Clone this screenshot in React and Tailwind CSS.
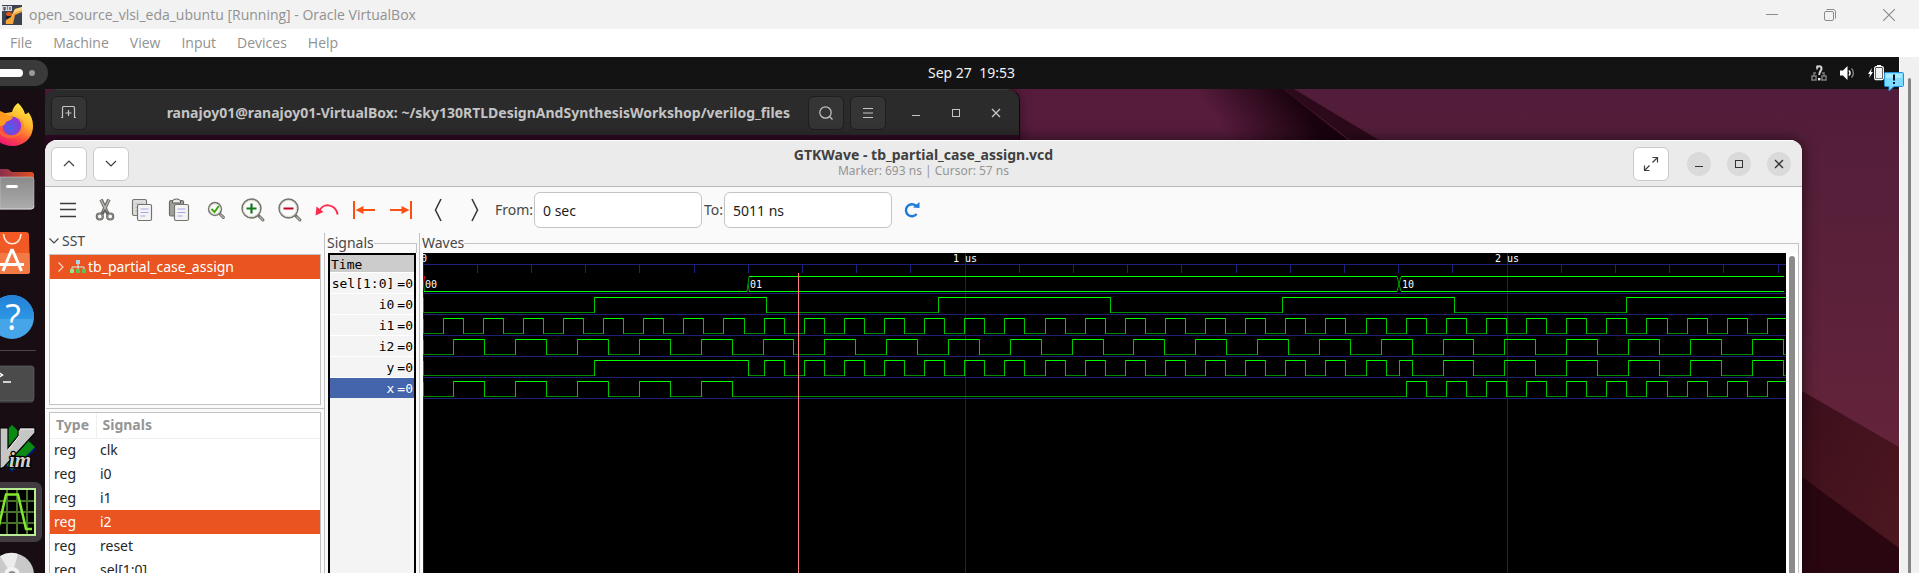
import React from "react";

/* ---------- wave data ---------- */

const PX_PER_NS = 0.5423;
const END_NS = 2513;
const px = (t) => Math.floor(t * PX_PER_NS);

const toggles = (half) => {
  const out = [];
  for (let t = half; t <= END_NS; t += half) out.push(t);
  return out;
};
const levelAt = (edges, t) => edges.filter((e) => e <= t).length % 2;
const between = (edges, a, b) => edges.filter((e) => e > a && e < b);

const I0 = toggles(317);
const I1 = toggles(37);
const I2 = toggles(57);

// Joins pieces of several signals, each valid for a span of time.
function mux(spans) {
  const out = [];
  let level = 0;
  for (const [src, from, to] of spans) {
    const start = levelAt(src, from);
    if (start !== level) {
      out.push(from);
      level = start;
    }
    for (const e of between(src, from, to)) {
      out.push(e);
      level = 1 - level;
    }
  }
  return out;
}

const Y = mux([[I0, 0, 600], [I1, 600, 1800], [I2, 1800, END_NS]]);
const X = mux([[I2, 0, 600], [[], 600, 1800], [I1, 1800, END_NS]]);

const TRACES = [I0, I1, I2, Y, X];
const TICKS = Array.from({ length: 26 }, (_, i) => i);

function Trace({ edges, top }) {
  const parts = [<rect key="s" x="0" y={top + 1} width="1" height="15" fill="#009c00" />];
  const pts = [0, ...edges.map(px), 1363];
  for (let i = 0; i < pts.length - 1; i++) {
    const high = i % 2 === 1;
    parts.push(
      <rect key={"h" + i} x={pts[i]} y={high ? top : top + 15} width={pts[i + 1] - pts[i] + 1} height="1" fill={high ? "#00ff00" : "#008a00"} />
    );
    if (i > 0) parts.push(<rect key={"v" + i} x={pts[i]} y={top} width="1" height="16" fill="#00c800" />);
  }
  return <g>{parts}</g>;
}

function WaveCanvas() {
  const a = px(600);
  const b = px(1800);
  return (
    <svg className="h-full min-w-0 flex-1 bg-black" role="img" aria-label="Waveforms" shapeRendering="crispEdges">
      <rect x="0" y="11" width="100%" height="1" fill="#202080" />
      {TICKS.map((i) => (
        <rect key={i} x={Math.floor(i * 54.2)} y="11" width="1" height="9" fill="#202080" />
      ))}
      {[0, 1, 2, 3, 4, 5].map((i) => (
        <rect key={i} x="0" y={40 + i * 21} width="100%" height="1" fill="#1f1f78" />
      ))}
      {[0, 542, 1084].map((x) => (
        <rect key={x} x={x} y="0" width="1" height="100%" fill="#1c1c6c" />
      ))}
      {TRACES.map((e, i) => (
        <Trace key={i} edges={e} top={44 + i * 21} />
      ))}
      <rect x="1" y="38" width={a - 2} height="1" fill="#00ff00" />
      <rect x={a + 1} y="23" width={b - a - 3} height="1" fill="#00ff00" />
      <rect x={a + 1} y="38" width={b - a - 3} height="1" fill="#00ff00" />
      <rect x={b + 2} y="23" width="383" height="1" fill="#00ff00" />
      <rect x={b + 2} y="38" width="383" height="1" fill="#00ff00" />
      <g shapeRendering="auto" fill="none" strokeWidth="1">
        <path d="M1.5 23L0.5 31" stroke="#ff0000" />
        <path d="M0.5 31L1.5 38" stroke="#009000" />
        <path d={`M${a - 1} 38.500L${a + 1} 23.500M${a} 31L${a + 1.5} 38.500`} stroke="#00a000" />
        <path d={`M${b - 2} 23.500L${b + 2} 38.500M${b - 2} 38.500L${b + 2} 23.500`} stroke="#00a000" />
      </g>
      <rect x="375" y="20" width="1" height="100%" fill="#ff8080" />
      <g fill="#ffffff" className="font-['DejaVu_Sans_Mono',monospace] text-[10px]">
        <text x="-2" y="9">0</text>
        <text x="530" y="9" xmlSpace="preserve">1 us</text>
        <text x="1072" y="9" xmlSpace="preserve">2 us</text>
        <text x="2" y="35">00</text>
        <text x="327" y="35">01</text>
        <text x="979" y="35">10</text>
      </g>
    </svg>
  );
}

/* ---------- host window ---------- */

function VBoxIcon() {
  return (
    <svg width="20" height="20" viewBox="0 0 20 20" aria-hidden="true">
      <rect width="20" height="20" fill="#3b4350" />
      <path d="M20 2L20 7L13 10L11 19L4 19C3 14 6 11 10 10L13 4Z" fill="#f8a63a" />
      <path d="M20 2L20 5L12 8L9 12L10 10L13 4Z" fill="#ffd58a" />
      <path d="M4 8C8 6 10 9 9 12L4 15Z" fill="#1d222a" />
      <ellipse cx="7" cy="9" rx="3" ry="2" fill="#e4571b" />
      <rect x="0" y="1" width="10" height="5" fill="#d8dbe0" />
      <path d="M2 2V5H3V2M5 2H6M5 4H6M8 2V5" stroke="#333" strokeWidth="1" fill="none" />
    </svg>
  );
}

const HOST_MENU = ["File", "Machine", "View", "Input", "Devices", "Help"];

function HostChrome() {
  return (
    <header className="font-['Open_Sans','Noto_Sans',sans-serif] text-[#919191]">
      <div className="flex h-[29px] items-center bg-[#f2f2f2] pl-0.5">
        <VBoxIcon />
        <h1 className="ml-[7px] flex-1 text-[14px] leading-5">open_source_vlsi_eda_ubuntu [Running] - Oracle VirtualBox</h1>
        <div className="flex h-full items-center text-[#8c8c8c]">
          <button aria-label="Minimize" className="flex h-full w-[58px] items-center justify-center">
            <svg width="12" height="12" viewBox="0 0 12 12"><path d="M0 5.500H12" stroke="currentColor" /></svg>
          </button>
          <button aria-label="Restore" className="flex h-full w-[58px] items-center justify-center">
            <svg width="12" height="12" viewBox="0 0 12 12" fill="none" stroke="currentColor"><rect x="0.500" y="2.500" width="9" height="9" rx="1.500" /><path d="M2.500 0.500H9C10.500 .500 11.500 1.500 11.500 3V9.500" /></svg>
          </button>
          <button aria-label="Close" className="flex h-full w-[60px] items-center justify-center">
            <svg width="12" height="12" viewBox="0 0 12 12"><path d="M0 0L12 12M12 0L0 12" stroke="currentColor" strokeWidth="1.200" /></svg>
          </button>
        </div>
      </div>
      <nav className="flex h-7 items-center gap-[21px] bg-white pl-[10px] text-[14px] leading-5">
        {HOST_MENU.map((m) => (
          <button key={m}>{m}</button>
        ))}
      </nav>
    </header>
  );
}

/* ---------- guest top bar ---------- */

function TopBar() {
  return (
    <div className="grid h-8 shrink-0 grid-cols-[1fr_auto_1fr] items-center bg-[#131313] text-[#f2f2f2]">
      <button aria-label="Workspaces" className="flex h-[26px] w-12 items-center gap-1.5 rounded-r-full bg-[#3a3a3a]">
        <span className="h-2 w-[23px] rounded-r-full bg-white" />
        <span className="size-1.5 rounded-full bg-[#9a9a9a]" />
      </button>
      <button className="pl-11 text-[14px] leading-5 whitespace-pre">Sep 27  19:53</button>
      <div className="flex items-center justify-end gap-[13px] pr-[15px]">
        <svg width="16" height="16" viewBox="0 0 16 16" fill="none" aria-label="Network">
          <g stroke="#7d7d7d" strokeWidth="1.500"><rect x="1" y="11" width="4" height="4" /><rect x="11" y="11" width="4" height="4" /><path d="M3 11V8H5M13 11V8H11M6 5V1H7" /></g>
          <path d="M6 3.500C6 .500 10.500 .500 10.500 3.500C10.500 6 8.200 6 8.200 10" stroke="#d5d5d5" strokeWidth="2" /><rect x="7" y="13" width="2.400" height="2.400" fill="#f2f2f2" />
        </svg>
        <svg width="15" height="14" viewBox="0 0 15 14" fill="none" aria-label="Volume">
          <path d="M0 4.500H3L7.500 0V14L3 9.500H0Z" fill="#fff" /><path d="M9 4.500C10.300 6 10.300 8 9 9.500" stroke="#eee" strokeWidth="1.500" /><path d="M11.500 2.500C14 5 14 9 11.500 11.500" stroke="#888" strokeWidth="1.300" />
        </svg>
        <svg width="16" height="16" viewBox="0 0 16 16" fill="none" aria-label="Battery">
          <path d="M4 3L0 9H2L1 13L5 7H3Z" fill="#fff" /><rect x="9" y="0" width="4" height="2" fill="#fff" /><rect x="6.700" y="1.700" width="8.600" height="13" rx="1.500" stroke="#fff" strokeWidth="1.300" /><rect x="8" y="3" width="6" height="10.500" fill="#f2f2f2" />
        </svg>
      </div>
    </div>
  );
}

/* ---------- dock ---------- */

function DockButton({ label, children }) {
  return (
    <button aria-label={label} className="block h-16 w-[45px]">
      <svg width="45" height="64" viewBox="0 0 45 64" aria-hidden="true">{children}</svg>
    </button>
  );
}

function Dock() {
  return (
    <nav aria-label="Dock" className="w-[45px] shrink-0 overflow-hidden bg-[#170d12] pt-[3px]">
      <svg width="0" height="0" className="absolute">
        <defs>
          <linearGradient id="ff" x1="0.800" y1="0" x2="0.300" y2="1"><stop offset="0" stopColor="#fff14a" /><stop offset="0.400" stopColor="#ffb12a" /><stop offset="0.700" stopColor="#ff4f3b" /><stop offset="1" stopColor="#e9117c" /></linearGradient>
          <radialGradient id="globe" cx="0.400" cy="0.600"><stop offset="0" stopColor="#4a62e8" /><stop offset="1" stopColor="#8b3ad8" /></radialGradient>
          <linearGradient id="front" x1="0" y1="0" x2="0" y2="1"><stop offset="0" stopColor="#8a8a8a" /><stop offset="1" stopColor="#acacac" /></linearGradient>
          <linearGradient id="back" x1="0" y1="0" x2="1" y2="0"><stop offset="0" stopColor="#8a2f4e" /><stop offset="1" stopColor="#e5501f" /></linearGradient>
          <linearGradient id="help" x1="0" y1="0" x2="0" y2="1"><stop offset="0" stopColor="#2381d6" /><stop offset="1" stopColor="#2d96e4" /></linearGradient>
        </defs>
      </svg>
      <DockButton label="Firefox">
        <path d="M18 11C22 15 24 18 25 22C27 22 28 21 28 20C32 25 33 29 33 34C33 46 24 54 12 54C1 54 -9 46 -9 34L0 22L12 20C13 16 15 13 18 11Z" fill="url(#ff)" />
        <circle cx="12" cy="34" r="9.500" fill="url(#globe)" />
        <path d="M0 19C4 20 6 22 8 24L13 25C12 28 8 29 6 30C5 33 3 34 0 34Z" fill="#ff9a1e" />
        <path d="M14 24C18 24 22 28 21 34C20 41 14 44 10 43C6 43 2 41 0 38V42C3 45 8 47 13 46C21 45 25 38 24 31C22 27 18 24 14 24Z" fill="#ff7a2e" opacity="0.550" />
      </DockButton>
      <DockButton label="Files">
        <path d="M0 13H8L12 16H31Q34 16 34 19V45H0Z" fill="url(#back)" />
        <path d="M0 21H31Q34 21 34 24V50Q34 53 31 53H0Z" fill="url(#front)" stroke="#cfcfcf" strokeWidth="0.500" />
        <path d="M0 53H31Q34 53 34 50" stroke="#d5d5d5" fill="none" />
        <rect x="6" y="29" width="12" height="3" rx="1.500" fill="#fff" />
      </DockButton>
      <DockButton label="App Center">
        <path d="M0 12H26Q29 12 29 15L30 51Q30 54 27 54H0Z" fill="#f15a24" />
        <path d="M0 33H29.500L30 51Q30 54 27 54H0Z" fill="#f47a45" />
        <path d="M3.500 14C4 27 20.500 27 21 14" stroke="#ffe9de" strokeWidth="1.600" fill="none" />
        <path d="M12 29L3 51M12 29L21.500 51M0 44.500H24" stroke="#fff" strokeWidth="3" fill="none" />
      </DockButton>
      <DockButton label="Help">
        <circle cx="12" cy="33" r="22" fill="#46a5e9" />
        <path d="M-10 35V33A22 22 0 0 1 34 33V35Z" fill="url(#help)" />
        <text x="13" y="46" textAnchor="middle" fill="#fff" className="font-['Open_Sans',sans-serif] text-[36px]">?</text>
      </DockButton>
      <div className="flex h-1 items-center"><div className="h-px w-9 bg-[#4b4448]" /></div>
      <DockButton label="Terminal">
        <rect x="-10" y="14" width="44" height="37" rx="3" fill="#303030" />
        <rect x="-10" y="14" width="44" height="35" rx="3" fill="#4b4b4b" stroke="#6a6a6a" strokeWidth="0.600" />
        <path d="M-2 20L2.500 23L-2 26M3 30H11" stroke="#fff" strokeWidth="1.500" fill="none" />
      </DockButton>
      <DockButton label="Vim">
        <path d="M12 9L36 33L12 56L-12 33Z" fill="#00187c" />
        <path d="M12 9L35 31L12 54L-12 32Z" fill="#0a8a12" />
        <path d="M-6 12H8V16H8V32L18 20V15L20 12H35V17L4 51L0 53V12Z" fill="#c6c6c6" stroke="#000" strokeWidth="1.200" />
        <path d="M20 13H34M8 34L19 20" stroke="#fff" strokeWidth="0.800" />
        <text x="9" y="51" fill="#d0d0d0" stroke="#000" strokeWidth="2.500" paintOrder="stroke" className="font-['Liberation_Serif',serif] text-[21px] font-bold italic">im</text>
      </DockButton>
      <DockButton label="GTKWave">
        <rect x="-12" y="2" width="54" height="60" rx="7" fill="#423c40" />
        <rect x="-12" y="9" width="47" height="46" fill="#000" stroke="#b9ec93" strokeWidth="2" />
        <path d="M7 10V54M17 10V54M27 10V54M0 21H34M0 32H34M0 43H34" stroke="#45732a" strokeWidth="2" />
        <path d="M-2 50L6 14.500H18L26 49H32" stroke="#82e62f" strokeWidth="2.500" fill="none" />
      </DockButton>
      <DockButton label="Disc">
        <circle cx="12" cy="31" r="22" fill="#c9c9c9" />
        <path d="M12 31L0 12A22 22 0 0 1 18 10Z" fill="#ececec" />
        <circle cx="12" cy="31" r="8" fill="#f4f4f4" /><circle cx="12" cy="31" r="4" fill="#8a8a8a" />
      </DockButton>
    </nav>
  );
}

/* ---------- windows ---------- */

const Bars = ({ s = 16, c = "#3d3d3d" }) => (
  <svg width={s} height={s} viewBox="0 0 16 16" aria-hidden="true"><path d="M0 1.500H16M0 7.500H16M0 14.500H16" stroke={c} strokeWidth="1.300" /></svg>
);
const CONTROLS = [
  ["Minimize", <path key="p" d="M2 8.500H10" stroke="currentColor" fill="none" />],
  ["Maximize", <rect key="p" x="2.500" y="2.500" width="7" height="7" stroke="currentColor" fill="none" />],
  ["Close", <path key="p" d="M2 2L10 10M10 2L2 10" stroke="currentColor" strokeWidth="1.400" fill="none" />],
];

function WindowControls({ tone }) {
  return (
    <div className="ml-[18px] flex gap-4">
      {CONTROLS.map(([label, shape]) => (
        <button key={label} aria-label={label} className={`flex size-6 items-center justify-center rounded-full ${tone}`}>
          <svg width="12" height="12" viewBox="0 0 12 12">{shape}</svg>
        </button>
      ))}
    </div>
  );
}

function TerminalWindow() {
  const btn = "flex h-[34px] w-9 items-center justify-center rounded-md border border-[#1e1e1e] bg-[#353535]";
  return (
    <section aria-label="Terminal" className="absolute top-0 left-0 h-full w-[974px] overflow-hidden rounded-t-xl border-t border-[#3c3c3c] bg-[#300a24] shadow-[1px_0_0_#140410,0_0_14px_rgba(0,0,0,0.45)]">
      <header className="flex h-[45px] items-center bg-[#2b2b2b] pr-[11px] pl-1.5 text-[#c4c4c4]">
        <button aria-label="New tab" className={btn}>
          <svg width="16" height="14" viewBox="0 0 16 14" fill="none" stroke="currentColor"><path d="M0 11.500H1.500V2Q1.500 .500 3 .500H12Q13.500 .500 13.500 2V11.500H15M7.500 4V10M4.500 7H10.500" strokeWidth="1.200" /></svg>
        </button>
        <h2 className="min-w-0 flex-1 pr-[18px] text-right text-[14px] leading-5 font-bold whitespace-nowrap">ranajoy01@ranajoy01-VirtualBox: ~/sky130RTLDesignAndSynthesisWorkshop/verilog_files</h2>
        <div className="flex gap-1.5">
          <button aria-label="Search" className={btn}>
            <svg width="14" height="14" viewBox="0 0 14 14" fill="none" stroke="currentColor" strokeWidth="1.200"><circle cx="6.500" cy="6.500" r="5.700" /><path d="M10.500 10.500L13.500 13.500" /></svg>
          </button>
          <button aria-label="Menu" className={btn}>
            <svg width="10" height="10" viewBox="0 0 10 10" stroke="currentColor"><path d="M0 .500H10M0 5H10M0 9.500H10" /></svg>
          </button>
        </div>
        <WindowControls tone="text-[#c4c4c4]" />
      </header>
    </section>
  );
}

function Lens({ r, cx, children, s = 24 }) {
  return (
    <svg width={s} height="24" viewBox="0 0 24 24" fill="none" aria-hidden="true">
      <path d={`M${cx + r * 0.7} ${cx + r * 0.7}L${cx + r + 2} ${cx + r + 2}`} stroke="#6f6f6a" strokeWidth="3" strokeLinecap="round" />
      <path d={`M${cx + r * 0.9} ${cx + r * 0.9}L${cx + r + 2} ${cx + r + 2}`} stroke="#b9b9b0" strokeWidth="1.300" strokeLinecap="round" />
      <circle cx={cx} cy={cx} r={r} fill="#fbfbfb" stroke="#777770" strokeWidth="1.600" />
      <circle cx={cx} cy={cx} r={r - 1.2} stroke="#d9d9cc" strokeWidth="1" />
      {children}
    </svg>
  );
}

const Page = ({ x, y, dark }) => (
  <g>
    <rect x={x} y={y} width="14" height="16" rx="1.500" fill={dark ? "#dcdcdc" : "#f4f4f4"} stroke="#74746f" strokeWidth="1.200" />
    <path d={`M${x + 3} ${y + 4.5}H${x + 11}M${x + 3} ${y + 8}H${x + 11}M${x + 3} ${y + 11.5}H${x + 8}`} stroke={dark ? "#b5b5b5" : "#a5a5ea"} strokeWidth="1.200" />
  </g>
);

const TOOLS = [
  ["Menu", <Bars key="i" />],
  ["Cut", (
    <svg key="i" width="20" height="24" viewBox="0 0 20 24" fill="none">
      <path d="M6 1.500L13 16M14 1.500L7 16" stroke="#6a6c68" strokeWidth="3.600" /><path d="M6 2L12.500 15M14 2L7.500 15" stroke="#b4b6b1" strokeWidth="1.500" />
      <circle cx="4.800" cy="18.500" r="3" stroke="#5f615d" strokeWidth="2.200" /><circle cx="15.200" cy="18.500" r="3" stroke="#5f615d" strokeWidth="2.200" />
      <circle cx="4.800" cy="18.500" r="3" stroke="#a9aba6" strokeWidth="0.700" /><circle cx="15.200" cy="18.500" r="3" stroke="#a9aba6" strokeWidth="0.700" />
      <path d="M7 16L10 12L13 16" stroke="#5f615d" strokeWidth="1.500" />
    </svg>
  )],
  ["Copy", <svg key="i" width="22" height="24" viewBox="0 0 22 24"><Page x={1.5} y={1.5} dark /><Page x={6.5} y={6.5} /></svg>],
  ["Paste", (
    <svg key="i" width="22" height="24" viewBox="0 0 22 24">
      <rect x="1.500" y="2.500" width="14" height="15.500" rx="1.500" fill="#a0a09c" stroke="#6a6a66" strokeWidth="1.200" /><path d="M4.500 5V3Q5 1 8.500 1Q12 1 12.500 3V5Z" fill="#e8e8e8" stroke="#5a5a56" /><Page x={6.5} y={6.5} />
    </svg>
  )],
  ["Zoom fit", <Lens key="i" r={6.4} cx={11}><path d="M7.500 11L10.500 14L14.800 8" stroke="#3fa60f" strokeWidth="2" /></Lens>],
  ["Zoom in", <Lens key="i" r={9.4} cx={10.5}><path d="M10.500 5.500V15.500M5.500 10.500H15.500" stroke="#117a1c" strokeWidth="2.200" /></Lens>],
  ["Zoom out", <Lens key="i" r={9.4} cx={10.5}><path d="M5.500 10.500H15.500" stroke="#c00428" strokeWidth="2.200" /></Lens>],
  ["Undo zoom", (
    <svg key="i" width="24" height="14" viewBox="0 0 24 14"><path d="M4 9C7 -.500 20 0 22.800 11.500" stroke="#fb2d4d" strokeWidth="2" fill="none" /><path d="M0.500 12.500L1.500 3.500L8.500 9Z" fill="#fb2d4d" /></svg>
  )],
  ["To start", <svg key="i" width="22" height="18" viewBox="0 0 22 18"><path d="M1 0V18M9 9H22" stroke="#fb5012" strokeWidth="2" /><path d="M2.500 9L10.500 5V13Z" fill="#fb5012" /></svg>],
  ["To end", <svg key="i" width="22" height="18" viewBox="0 0 22 18"><path d="M21 0V18M0 9H13" stroke="#fb5012" strokeWidth="2" /><path d="M19.500 9L11.500 5V13Z" fill="#fb5012" /></svg>],
  ["Previous edge", <svg key="i" width="8" height="24" viewBox="0 0 8 24"><path d="M7 1L1.500 12L7 23" stroke="#3d3d3d" strokeWidth="1.600" fill="none" /></svg>],
  ["Next edge", <svg key="i" width="8" height="24" viewBox="0 0 8 24"><path d="M1 1L6.500 12L1 23" stroke="#3d3d3d" strokeWidth="1.600" fill="none" /></svg>],
];

function Toolbar() {
  const field = "h-9 w-[168px] rounded-md border border-[#c4c4c4] bg-white px-2 text-[14px] leading-5 text-[#1c1c1c]";
  return (
    <div className="flex h-[46px] shrink-0 items-center pl-1 text-[14px] leading-5 text-[#474747]">
      {TOOLS.map(([label, icon]) => (
        <button key={label} aria-label={label} className="flex h-full w-[37px] shrink-0 items-center justify-center">{icon}</button>
      ))}
      <label htmlFor="from" className="w-[41px] pr-px text-right">From:</label>
      <input id="from" className={field} defaultValue="0 sec" />
      <label htmlFor="to" className="w-[22px] pr-px text-right">To:</label>
      <input id="to" className={field} defaultValue="5011 ns" />
      <button aria-label="Reload" className="flex h-full w-10 items-center justify-center">
        <svg width="16" height="16" viewBox="0 0 16 16"><path d="M12.600 12A6 6 0 1 1 12 3.800" stroke="#1c7bd8" strokeWidth="2.400" fill="none" /><path d="M9 5.500L15.500 6V0Z" fill="#1c7bd8" /></svg>
      </button>
    </div>
  );
}

const VARS = [["reg", "clk"], ["reg", "i0"], ["reg", "i1"], ["reg", "i2"], ["reg", "reset"], ["reg", "sel[1:0]"]];

function TreePane() {
  return (
    <div className="flex w-[280px] shrink-0 flex-col border-r border-[#c2c2c2] text-[14px]">
      <button className="flex h-[21px] shrink-0 items-center gap-[3px] pb-1.5 pl-1 leading-4 text-[#474747]">
        <svg width="10" height="6" viewBox="0 0 10 6"><path d="M.500 .500L5 5L9.500 .500" stroke="#474747" strokeWidth="1.200" fill="none" /></svg>
        SST
      </button>
      <ul className="mr-[3px] ml-1 h-[151px] shrink-0 border border-[#c2c2c2] bg-white">
        <li>
          <button className="flex h-6 w-full items-center bg-[#e95420] pl-2 leading-5 text-white">
            <svg width="6" height="10" viewBox="0 0 6 10"><path d="M.500 .500L5 5L.500 9.500" stroke="#ffd9c8" strokeWidth="1.200" fill="none" /></svg>
            <svg className="mr-0.5 ml-1.5" width="16" height="14" viewBox="0 0 16 14"><path d="M8 4V7M2 9V7H14V9M8 7V9" stroke="#d9ece0" fill="none" /><rect x="6" y="0" width="4" height="4" fill="#a9d5ee" /><rect x="0" y="9" width="4" height="4" fill="#9be08c" /><rect x="6" y="9" width="4" height="4" fill="#62bd52" /><rect x="12" y="9" width="4" height="4" fill="#62bd52" /></svg>
            tb_partial_case_assign
          </button>
        </li>
      </ul>
      <div className="mt-[3px] mb-[3px] ml-px h-px shrink-0 bg-[#c2c2c2]" />
      <div className="mr-[3px] ml-1 min-h-0 flex-1 overflow-hidden border border-b-0 border-[#c2c2c2] bg-white">
        <table className="w-full border-collapse text-left leading-5 text-[#262626]">
          <thead>
            <tr className="h-[25px] border-b border-[#f0f0f0] text-[#959595]">
              <th className="w-[46px] border-r border-[#f0f0f0] pl-[6px] font-bold">Type</th>
              <th className="pl-1.5 font-bold">Signals</th>
            </tr>
          </thead>
          <tbody>
            {VARS.map(([type, name]) => (
              <tr key={name} className={name === "i2" ? "h-6 bg-[#e95420] text-white" : "h-6"}>
                <td className="p-0 pl-1">{type}</td>
                <td className="p-0 pl-1">{name}</td>
              </tr>
            ))}
          </tbody>
        </table>
      </div>
    </div>
  );
}

function FrameHead({ label }) {
  return (
    <div className="flex h-5 shrink-0 items-center">
      <h3 className="text-[14px] leading-5 text-[#474747]">{label}</h3>
      <div className="h-[10px] flex-1 self-end border-t border-r border-[#c2c2c2]" />
    </div>
  );
}

const NAMES = ["sel[1:0]", "i0", "i1", "i2", "y", "x"];

function SignalsPane() {
  return (
    <div className="flex w-[95px] shrink-0 flex-col border-r border-[#c2c2c2] pr-0.5 pl-0.5">
      <FrameHead label="Signals" />
      <div className="mr-px ml-px min-h-0 flex-1 border-2 border-b-0 border-black bg-[#f4f4f4] font-['DejaVu_Sans_Mono',monospace] text-[13px] text-black">
        <div className="h-[17px] bg-[#cccccc] pl-px leading-[20px]">Time</div>
        <ul>
          {NAMES.map((n) => (
            <li key={n} className={`flex h-[21px] justify-end gap-[3px] border-t border-white pr-px leading-[21px] whitespace-pre ${n === "x" ? "bg-[#4464ac] text-white" : ""}`}>
              <span>{n}</span>
              <span>=0</span>
            </li>
          ))}
        </ul>
      </div>
    </div>
  );
}

function WavesPane() {
  return (
    <div className="flex min-w-0 flex-1 flex-col pr-[3px] pl-0.5">
      <FrameHead label="Waves" />
      <div className="flex min-h-0 flex-1 border-r border-[#c2c2c2] bg-white pl-px">
        <WaveCanvas />
        <div className="w-3 shrink-0 pt-[3px] pl-[3px]">
          <div className="h-full w-1.5 rounded-t-full bg-[#8b8b8b]" />
        </div>
      </div>
    </div>
  );
}

function GtkWaveWindow() {
  const btn = "flex h-[34px] w-9 items-center justify-center rounded-md border border-[#cacaca] bg-white text-[#3d3d3d]";
  return (
    <section aria-label="GTKWave" className="absolute top-[51px] right-[97px] bottom-0 left-0 flex flex-col overflow-hidden rounded-t-xl bg-[#fafafa] shadow-[0_0_16px_rgba(0,0,0,0.6)]">
      <header className="grid h-[47px] shrink-0 grid-cols-[1fr_auto_1fr] items-center border-t border-b border-t-white border-b-[#b8b8b8] bg-[#ebebeb] px-1.5">
        <div className="flex gap-1.5">
          <button aria-label="Previous page" className={btn}>
            <svg width="12" height="7" viewBox="0 0 12 7"><path d="M1 6L6 1L11 6" stroke="currentColor" strokeWidth="1.200" fill="none" /></svg>
          </button>
          <button aria-label="Next page" className={btn}>
            <svg width="12" height="7" viewBox="0 0 12 7"><path d="M1 1L6 6L11 1" stroke="currentColor" strokeWidth="1.200" fill="none" /></svg>
          </button>
        </div>
        <div className="pb-0.5 text-center">
          <h2 className="text-[14px] leading-4 font-bold text-[#404040]">GTKWave - tb_partial_case_assign.vcd</h2>
          <p className="text-[12px] leading-4 text-[#959595]">Marker: 693 ns | Cursor: 57 ns</p>
        </div>
        <div className="flex items-center justify-end pr-[5px]">
          <button aria-label="Full screen" className={btn}>
            <svg width="16" height="16" viewBox="0 0 16 16"><path d="M1.500 14.500L6.500 9.500M9.500 6.500L14.500 1.500M9.500 1.500H14.500V6.500M1.500 9.500V14.500H6.500" stroke="currentColor" strokeWidth="1.200" fill="none" /></svg>
          </button>
          <WindowControls tone="bg-[#dadada] text-[#333333]" />
        </div>
      </header>
      <Toolbar />
      <div className="flex min-h-0 flex-1">
        <TreePane />
        <SignalsPane />
        <WavesPane />
      </div>
    </section>
  );
}

function Wallpaper() {
  return (
    <svg className="absolute inset-0 h-full w-full" aria-hidden="true">
      <defs>
        <linearGradient id="base" x1="0" y1="0" x2="0" y2="1"><stop offset="0" stopColor="#521d3a" /><stop offset="1" stopColor="#6a263a" /></linearGradient>
        <linearGradient id="fold" gradientUnits="userSpaceOnUse" x1="1200" y1="70" x2="1262" y2="24"><stop offset="0" stopColor="#571c3c" /><stop offset="1" stopColor="#1a020e" /></linearGradient>
        <linearGradient id="low" x1="0" y1="0" x2="1" y2="1"><stop offset="0" stopColor="#3c0f1c" /><stop offset="1" stopColor="#4e1820" /></linearGradient>
      </defs>
      <rect width="100%" height="100%" fill="url(#base)" />
      <path d="M0 0H1238L1340 80H0Z" fill="url(#fold)" />
      <path d="M1238 0H1249L1382 80H1343Z" fill="#2d0a1b" />
      <path d="M1757 302L1854 358V484H1757Z" fill="url(#low)" />
      <path d="M1757 388L1854 459V484H1757Z" fill="#2a0710" />
    </svg>
  );
}

export default function App() {
  return (
    <div className="flex h-screen min-h-0 flex-col overflow-hidden bg-[#f0f0f0] font-['Noto_Sans',sans-serif]">
      <HostChrome />
      <div className="flex min-h-0 flex-1">
        <main className="relative flex min-w-0 flex-1 flex-col">
          <TopBar />
          <div className="flex min-h-0 flex-1">
            <Dock />
            <div className="relative min-w-0 flex-1 overflow-hidden">
              <Wallpaper />
              <TerminalWindow />
              <GtkWaveWindow />
            </div>
          </div>
          <svg className="absolute top-[15px] -right-[5px]" width="20" height="20" viewBox="0 0 20 20" aria-label="Notification">
            <path d="M1.500 .500H18.500Q19.500 .500 19.500 1.500V13.500Q19.500 14.500 18.500 14.500H10L5 19V14.500H1.500Q.500 14.500 .500 13.500V1.500Q.500 .500 1.500 .500Z" fill="#7cdcff" stroke="#2b8fe0" />
            <path d="M2 2H18V6H2Z" fill="#a9eaff" />
            <path d="M10 2.500V8.500M10 10V12" stroke="#06121c" strokeWidth="2" />
          </svg>
        </main>
        <div className="w-5 border-l border-white pt-[21px] pl-2">
          <div className="h-full w-[3px] rounded-t-full bg-[#858585]" />
        </div>
      </div>
    </div>
  );
}
